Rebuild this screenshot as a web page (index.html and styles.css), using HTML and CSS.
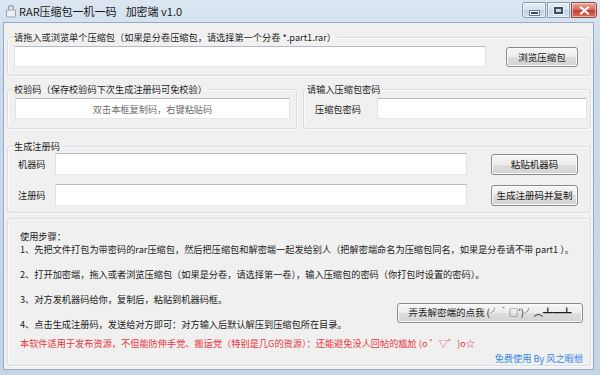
FILE: index.html
```html
<!DOCTYPE html>
<html lang="zh-CN">
  <head>
    <meta charset="UTF-8" />
    <meta name="viewport" content="width=device-width, initial-scale=1.0" />
    <title>RAR压缩包一机一码 加密端 v1.0</title>
    <link rel="stylesheet" href="styles.css">
  </head>
  <body>
    <div class="window">
      <div class="titlebar">
        <svg class="app-icon" width="12" height="14" viewBox="0 0 12 14">
          <path d="M3.5 6V4.2a2.5 2.5 0 0 1 5 0V6" fill="none" stroke="#9aa3ad" stroke-width="1.3" />
          <rect x="1.5" y="6" width="9" height="7" rx="1" fill="#eef1f4" stroke="#9aa3ad" />
        </svg>
        <span class="title">RAR压缩包一机一码<span class="title-gap"></span>加密端 v1.0</span>
        <div class="caption">
          <span class="cap cap-min"><i></i></span>
          <span class="cap cap-max"><i></i></span>
          <span class="cap cap-close">
            <svg width="11" height="9" viewBox="0 0 11 9">
              <path d="M2 1.5l7 6M9 1.5l-7 6" stroke="#fff" stroke-width="2.2" stroke-linecap="round" />
            </svg>
          </span>
        </div>
      </div>

      <div class="frame">
        <div class="client">
          <fieldset class="group file-box">
            <legend>请拖入或浏览单个压缩包（如果是分卷压缩包，请选择第一个分卷 *.part1.rar）</legend>
            <div class="row">
              <input class="field" type="text" />
              <button class="btn">浏览压缩包</button>
            </div>
          </fieldset>

          <div class="pair">
            <fieldset class="group check-box">
              <legend>校验码（保存校验码下次生成注册码可免校验）</legend>
              <div class="row">
                <input class="field hint" type="text" placeholder="双击本框复制码，右键粘贴码" />
              </div>
            </fieldset>
            <fieldset class="group pwd-box">
              <legend>请输入压缩包密码</legend>
              <div class="row">
                <label class="label pwd-label">压缩包密码</label>
                <input class="field" type="text" />
              </div>
            </fieldset>
          </div>

          <fieldset class="group reg-box">
            <legend>生成注册码</legend>
            <div class="rows">
              <div class="row">
                <label class="label">机器码</label>
                <input class="field" type="text" />
                <button class="btn">粘贴机器码</button>
              </div>
              <div class="row">
                <label class="label">注册码</label>
                <input class="field" type="text" />
                <button class="btn">生成注册码并复制</button>
              </div>
            </div>
          </fieldset>

          <fieldset class="group help-box">
            <div class="steps">
              <p>使用步骤：</p>
              <p>1、先把文件打包为带密码的rar压缩包，然后把压缩包和解密端一起发给别人（把解密端命名为压缩包同名，如果是分卷请不带 part1 ）。</p>
              <p class="gap">2、打开加密端，拖入或者浏览压缩包（如果是分卷，请选择第一卷），输入压缩包的密码（你打包时设置的密码）。</p>
              <p class="gap"><button class="btn lost-btn">弄丢解密端的点我 (╯‵□′)╯︵┻━┻</button>3、对方发机器码给你，复制后，粘贴到机器码框。</p>
              <p class="gap">4、点击生成注册码，发送给对方即可：对方输入后默认解压到压缩包所在目录。</p>
            </div>
            <p class="note">本软件适用于发布资源，不但能防伸手党、搬运党（特别是几G的资源）：还能避免没人回帖的尴尬 (o ゜▽゜)o☆</p>
            <p class="credit">免费使用 By 风之暇想</p>
          </fieldset>
        </div>
      </div>
    </div>
  </body>
</html>
```

FILE: styles.css
```css
* {
  margin: 0;
  padding: 0;
  box-sizing: border-box;
}

body {
  background: #ffffff;
  font-family: "Noto Sans CJK SC", "Noto Sans", sans-serif;
  font-size: 9.2px;
  color: #1b1b1b;
}

.window {
  width: 600px;
  height: 375px;
  display: flex;
  flex-direction: column;
  background: linear-gradient(#dbe6f1, #cbdbec 60px, #c2d5e9);
}

/* title bar */
.titlebar {
  height: 22px;
  display: flex;
  align-items: center;
  padding-left: 5px;
}

.app-icon {
  margin-right: 2px;
}

.title {
  font-size: 11px;
  color: #1a1a1a;
}

.title-gap {
  display: inline-block;
  width: 9px;
}

.caption {
  margin-left: auto;
  margin-right: 3px;
  align-self: flex-start;
  margin-top: 2px;
  display: flex;
  gap: 1px;
}

.cap {
  width: 24px;
  height: 16px;
  border: 1px solid #8b9db5;
  background: linear-gradient(#e8eff7, #d3e0ee 50%, #bfd1e5 50%, #d2e0ef);
  display: flex;
  align-items: center;
  justify-content: center;
  box-shadow: inset 0 0 0 1px rgba(255, 255, 255, 0.5);
}

.cap-min {
  border-radius: 3px 0 0 3px;
}

.cap-min i {
  width: 9px;
  height: 4px;
  margin-top: 5px;
  background: #3d4c5e;
  border: 1px solid #f4f7fa;
  outline: 1px solid #6d7c8f;
}

.cap-max {
  width: 23px;
}

.cap-max i {
  width: 9px;
  height: 7px;
  border: 2px solid #3d4c5e;
  outline: 1px solid #eef2f6;
}

.cap-close {
  width: 26px;
  border-color: #8d4a42;
  border-radius: 0 3px 3px 0;
  background: linear-gradient(#e9a596, #d4695a 50%, #c2402f 50%, #d8705a);
}

/* frame and client area */
.frame {
  flex: 1;
  display: flex;
  padding: 0 6px 5px 3px;
}

.client {
  flex: 1;
  background: #f0f0f0;
  border: 1px solid #98abc2;
  padding: 8px 2px 3px 3px;
  display: flex;
  flex-direction: column;
}

.group {
  border: 1px solid #d5dfe5;
  border-radius: 3px;
  min-width: 0;
  box-shadow: 1px 1px 0 #fbfbfb, inset 1px 1px 0 #fbfbfb;
}

.group legend {
  margin-left: 5px;
  padding: 0 1px;
  line-height: 12px;
}

.row {
  display: flex;
  align-items: center;
}

.field {
  height: 21px;
  flex: 1;
  min-width: 0;
  background: #ffffff;
  border: 1px solid;
  border-color: #b5bcc6 #dde2e8 #e3e9ef #dde2e8;
  font: inherit;
  outline: none;
}

.hint {
  text-align: center;
}

.hint::placeholder {
  color: #6d6d6d;
}

.btn {
  height: 20px;
  border: 1px solid #8a8a8a;
  border-radius: 3px;
  background: linear-gradient(#f6f6f6, #ececec 50%, #dedede 50%, #d3d3d3);
  box-shadow: inset 0 0 0 1px #fbfbfb;
  font: inherit;
  font-size: 9.5px;
  color: #1b1b1b;
}

.label {
  width: 37px;
  flex-shrink: 0;
}

/* file */
.file-box .row {
  padding: 3px 12px 8px 6px;
  gap: 20px;
}

.file-box .btn {
  width: 72px;
}

/* check code / password */
.pair {
  margin-top: 7px;
  display: flex;
  gap: 6px;
}

.check-box {
  width: 290px;
}

.check-box .row {
  padding: 3px 6px 9px 7px;
}

.pwd-box {
  flex: 1;
}

.pwd-box legend {
  margin-left: 2px;
}

.pwd-box .row {
  padding: 3px 3px 9px 11px;
}

.pwd-label {
  width: 62px;
}

/* register */
.reg-box {
  margin-top: 11px;
}

.rows {
  padding: 1px 12px 6px 10px;
  display: flex;
  flex-direction: column;
  gap: 9px;
}

.reg-box .row {
  height: 22px;
}

.reg-box .field {
  height: 22px;
}

.reg-box .btn {
  width: 87px;
  height: 21px;
  margin-left: 24px;
}

/* help */
.help-box {
  margin-top: 5px;
  flex: 1;
  padding: 11px 7px 0 12px;
}

.steps p {
  line-height: 12.5px;
}

.steps .gap {
  margin-top: 12.5px;
}

.lost-btn {
  float: right;
  width: 186px;
  margin-top: 10px;
}

.note {
  margin-top: 7px;
  line-height: 12.5px;
  color: #e8363b;
}

.credit {
  margin-top: 2.5px;
  line-height: 12.5px;
  text-align: right;
  color: #3588e0;
}
```
